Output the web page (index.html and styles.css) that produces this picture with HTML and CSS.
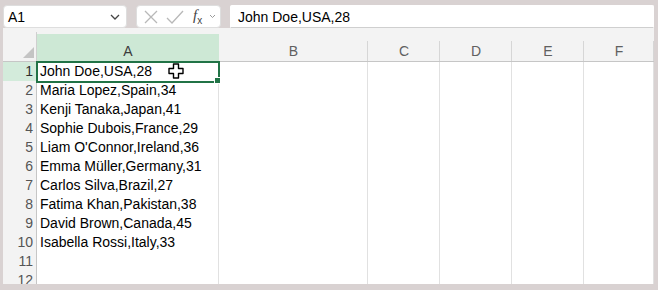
FILE: index.html
```html
<!DOCTYPE html>
<html lang="en">
<head>
  <meta charset="UTF-8">
  <title>Sheet</title>
  <link rel="stylesheet" href="styles.css">
</head>
<body>
  <div class="window">
    <div class="toolbar">
      <div class="namebox">
        <span>A1</span>
        <svg class="chev" width="10" height="6" viewBox="0 0 10 6"><polyline points="1,1 5,5 9,1" fill="none" stroke="#444" stroke-width="1.3"/></svg>
      </div>
      <div class="fxbox">
        <svg width="16" height="16" viewBox="0 0 16 16"><path d="M2 2 L14 14 M14 2 L2 14" stroke="#b8b8b8" stroke-width="1.3" fill="none"/></svg>
        <svg width="18" height="16" viewBox="0 0 18 16"><polyline points="1,9 6,14 17,2" stroke="#b8b8b8" stroke-width="1.3" fill="none"/></svg>
        <span class="fx"><i>f</i><sub>x</sub></span>
        <svg width="7" height="5" viewBox="0 0 7 5"><polyline points="1,1 3.5,3.5 6,1" fill="none" stroke="#9a9a9a" stroke-width="1"/></svg>
      </div>
      <div class="formula">John Doe,USA,28</div>
    </div>

    <div class="sheet">
      <div class="row head">
        <div class="corner"><svg width="11" height="11" viewBox="0 0 11 11"><polygon points="11,0 11,11 0,11" fill="#c4c4c4"/></svg></div>
        <div class="colhead sel">A</div>
        <div class="colhead">B</div>
        <div class="colhead">C</div>
        <div class="colhead">D</div>
        <div class="colhead">E</div>
        <div class="colhead">F</div>
      </div>
      <div class="row">
        <div class="rownum sel">1</div>
        <div class="cell active">John Doe,USA,28
          <svg class="cursor" width="16" height="16" viewBox="0 0 16 16"><path d="M5.5 1 H10.5 V5.5 H15 V10.5 H10.5 V15 H5.5 V10.5 H1 V5.5 H5.5 Z" fill="#fff" stroke="#000" stroke-width="1.4" stroke-linejoin="round"/></svg>
        </div>
        <div class="cell"></div><div class="cell"></div><div class="cell"></div><div class="cell"></div><div class="cell"></div>
      </div>
      <div class="row">
        <div class="rownum">2</div><div class="cell">Maria Lopez,Spain,34</div>
        <div class="cell"></div><div class="cell"></div><div class="cell"></div><div class="cell"></div><div class="cell"></div>
      </div>
      <div class="row">
        <div class="rownum">3</div><div class="cell">Kenji Tanaka,Japan,41</div>
        <div class="cell"></div><div class="cell"></div><div class="cell"></div><div class="cell"></div><div class="cell"></div>
      </div>
      <div class="row">
        <div class="rownum">4</div><div class="cell">Sophie Dubois,France,29</div>
        <div class="cell"></div><div class="cell"></div><div class="cell"></div><div class="cell"></div><div class="cell"></div>
      </div>
      <div class="row">
        <div class="rownum">5</div><div class="cell">Liam O'Connor,Ireland,36</div>
        <div class="cell"></div><div class="cell"></div><div class="cell"></div><div class="cell"></div><div class="cell"></div>
      </div>
      <div class="row">
        <div class="rownum">6</div><div class="cell">Emma Müller,Germany,31</div>
        <div class="cell"></div><div class="cell"></div><div class="cell"></div><div class="cell"></div><div class="cell"></div>
      </div>
      <div class="row">
        <div class="rownum">7</div><div class="cell">Carlos Silva,Brazil,27</div>
        <div class="cell"></div><div class="cell"></div><div class="cell"></div><div class="cell"></div><div class="cell"></div>
      </div>
      <div class="row">
        <div class="rownum">8</div><div class="cell">Fatima Khan,Pakistan,38</div>
        <div class="cell"></div><div class="cell"></div><div class="cell"></div><div class="cell"></div><div class="cell"></div>
      </div>
      <div class="row">
        <div class="rownum">9</div><div class="cell">David Brown,Canada,45</div>
        <div class="cell"></div><div class="cell"></div><div class="cell"></div><div class="cell"></div><div class="cell"></div>
      </div>
      <div class="row">
        <div class="rownum">10</div><div class="cell">Isabella Rossi,Italy,33</div>
        <div class="cell"></div><div class="cell"></div><div class="cell"></div><div class="cell"></div><div class="cell"></div>
      </div>
      <div class="row">
        <div class="rownum">11</div><div class="cell"></div>
        <div class="cell"></div><div class="cell"></div><div class="cell"></div><div class="cell"></div><div class="cell"></div>
      </div>
      <div class="row">
        <div class="rownum">12</div><div class="cell"></div>
        <div class="cell"></div><div class="cell"></div><div class="cell"></div><div class="cell"></div><div class="cell"></div>
      </div>
    </div>
  </div>
</body>
</html>
```

FILE: styles.css
```css
body {
  margin: 0;
  background: #d9d2d2;
  font-family: "Liberation Sans", Arial, sans-serif;
  font-size: 14px;
  color: #000;
}
.window {
  width: 658px;
  height: 290px;
  padding: 5px 4px 6px 3px;
  box-sizing: border-box;
  display: flex;
  flex-direction: column;
  overflow: hidden;
}

/* toolbar */
.toolbar {
  display: flex;
  gap: 9px;
  height: 23px;
  flex-shrink: 0;
}
.namebox, .fxbox, .formula {
  background: #fff;
  border: 1px solid #dedede;
  border-radius: 4px;
  box-sizing: border-box;
  height: 23px;
  display: flex;
  align-items: center;
}
.namebox {
  width: 124px;
  padding: 0 6px 0 4px;
  justify-content: space-between;
}
.fxbox {
  width: 85px;
  padding: 0 0 0 6px;
  gap: 7px;
}
.fx {
  font-family: "Liberation Serif", serif;
  font-size: 15px;
  color: #444;
  margin-left: 2px;
}
.fx sub {
  font-family: "Liberation Sans", sans-serif;
  font-size: 10px;
  font-style: normal;
}
.formula {
  flex: 1;
  padding-left: 7px;
  border-radius: 2px 2px 0 0;
  border-color: #fff #fff #cfcfcf;
}

/* sheet */
.sheet {
  flex: 1;
  background: #f3f3f3;
  padding-top: 4px;
  overflow: hidden;
}
.row {
  display: grid;
  grid-template-columns: 34px 182px 149px 72px 72px 72px 70px;
  height: 19px;
}
.row.head {
  height: 30px;
}
.corner {
  border-right: 1px solid #cfcfcf;
  border-bottom: 1px solid #c6c6c6;
  display: flex;
  align-items: flex-end;
  justify-content: flex-end;
  padding: 0 2px 3px 0;
  box-sizing: border-box;
}
.colhead {
  background: linear-gradient(#d6d6d6, #d6d6d6) right bottom / 1px 20px no-repeat;
  border-bottom: 1px solid #c6c6c6;
  display: flex;
  align-items: flex-end;
  justify-content: center;
  color: #606060;
  padding-bottom: 1px;
  line-height: 18px;
}
.colhead.sel {
  background: linear-gradient(#cde8d5, #cde8d5) bottom / 100% 27px no-repeat;
  border-bottom-color: #217346;
  color: #3c3c3c;
}
.rownum {
  background: #f3f3f3;
  border-right: 1px solid #c6c6c6;
  border-bottom: 1px solid #e2e2e2;
  text-align: right;
  padding-right: 3px;
  color: #555;
  line-height: 19px;
  box-sizing: border-box;
}
.rownum.sel {
  background: #d3ebdb;
  color: #2f2f2f;
}
.cell {
  background: #fff;
  border-right: 1px solid #e1e1e1;
  border-bottom: 1px solid #e1e1e1;
  padding-left: 3px;
  line-height: 19px;
  white-space: nowrap;
  box-sizing: border-box;
}
.cell.active {
  position: relative;
  outline: 2px solid #217346;
  outline-offset: -1px;
}
.cell.active::after {
  content: "";
  position: absolute;
  right: -3px;
  bottom: -3px;
  width: 5px;
  height: 5px;
  background: #217346;
  border: 1px solid #fff;
}
.cursor {
  position: absolute;
  left: 131px;
  top: 1px;
}
```
